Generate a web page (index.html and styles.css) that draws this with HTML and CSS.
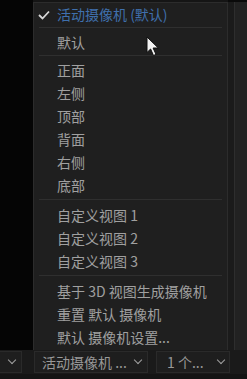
FILE: index.html
```html
<!DOCTYPE html>
<html lang="zh-CN">
<head>
    <meta charset="UTF-8">
    <title>摄像机菜单</title>
    <link rel="stylesheet" href="styles.css">
</head>
<body>
    <div class="viewer">
        <div class="canvas"></div>
        <div class="menu">
            <div class="item active">
                <svg class="check" width="12" height="10" viewBox="0 0 12 10"><path d="M1 5 L4.5 8.5 L11 1.5" fill="none" stroke="#d8d8d8" stroke-width="1.8"/></svg>
                活动摄像机 (默认)
            </div>
            <div class="sep small"></div>
            <div class="item">默认</div>
            <div class="sep small"></div>
            <div class="item">正面</div>
            <div class="item">左侧</div>
            <div class="item">顶部</div>
            <div class="item">背面</div>
            <div class="item">右侧</div>
            <div class="item">底部</div>
            <div class="sep"></div>
            <div class="item">自定义视图 1</div>
            <div class="item">自定义视图 2</div>
            <div class="item">自定义视图 3</div>
            <div class="sep"></div>
            <div class="item">基于 3D 视图生成摄像机</div>
            <div class="item">重置 默认 摄像机</div>
            <div class="item">默认 摄像机设置...</div>
        </div>
        <div class="side"></div>
        <svg class="cursor" width="14" height="21" viewBox="0 0 14 21"><path d="M1 1 L1 16.5 L4.6 13 L7.5 19.5 L10 18.4 L7.1 12 L12.3 12 Z" fill="#f2f2f2" stroke="#111" stroke-width="1"/></svg>
    </div>
    <div class="bar">
        <div class="ctl first"><span class="chev"></span></div>
        <div class="ctl cam"><span class="label">活动摄像机 ...</span><span class="chev"></span></div>
        <div class="ctl views"><span class="label">1 个...</span><span class="chev"></span></div>
    </div>
    <div class="footer"></div>
</body>
</html>
```

FILE: styles.css
```css
body {
    margin: 0;
    width: 247px;
    height: 379px;
    overflow: hidden;
    background: #151515;
    font-family: "Noto Sans CJK SC", "Noto Sans", sans-serif;
    font-size: 14px;
}

.viewer {
    position: relative;
    display: flex;
    height: 350px;
}

.canvas {
    width: 33px;
    background: #050505;
}

.menu {
    width: 193px;
    margin-top: 2px;
    background: #1f1f1f;
    border: 1px solid #2c2c2c;
    border-bottom: none;
}

.item {
    position: relative;
    height: 23px;
    line-height: 23px;
    padding-left: 23px;
    color: #a0a0a0;
    white-space: nowrap;
}

.item.active {
    color: #3f70ad;
}

.check {
    position: absolute;
    left: 4px;
    top: 7px;
}

.sep {
    height: 1px;
    margin: 2px 5px 4px;
    background: #2f2f2f;
}

.sep.small {
    margin: 1px 5px 3px;
}

.side {
    flex: 1;
    background: #1b1b1b;
    border-top: 2px solid #0a0a0a;
    display: flex;
    justify-content: flex-end;
}

.side::after {
    content: "";
    width: 12px;
    background: #222;
    border-left: 1px solid #2e2e2e;
}

.cursor {
    position: absolute;
    left: 146px;
    top: 36px;
}

.bar {
    display: flex;
    height: 24px;
    background: #1a1a1a;
    box-sizing: border-box;
    padding-top: 1px;
}

.ctl {
    display: flex;
    align-items: center;
    justify-content: space-between;
    height: 22px;
    background: #1e1e1e;
    border: 1px solid #2a2a2a;
    box-sizing: border-box;
    color: #989898;
    white-space: nowrap;
}

.ctl.first {
    width: 22px;
    border-left: none;
    justify-content: flex-end;
    padding-right: 6px;
}

.ctl.cam {
    width: 114px;
    margin-left: 12px;
    padding: 0 6px 0 7px;
}

.ctl.views {
    width: 74px;
    margin-left: 8px;
    padding: 0 5px 0 10px;
}

.chev {
    width: 5px;
    height: 5px;
    border-right: 1.3px solid #a0a0a0;
    border-bottom: 1.3px solid #a0a0a0;
    transform: rotate(45deg);
    margin-top: -4px;
}

.footer {
    height: 5px;
    background: #141414;
}
```
